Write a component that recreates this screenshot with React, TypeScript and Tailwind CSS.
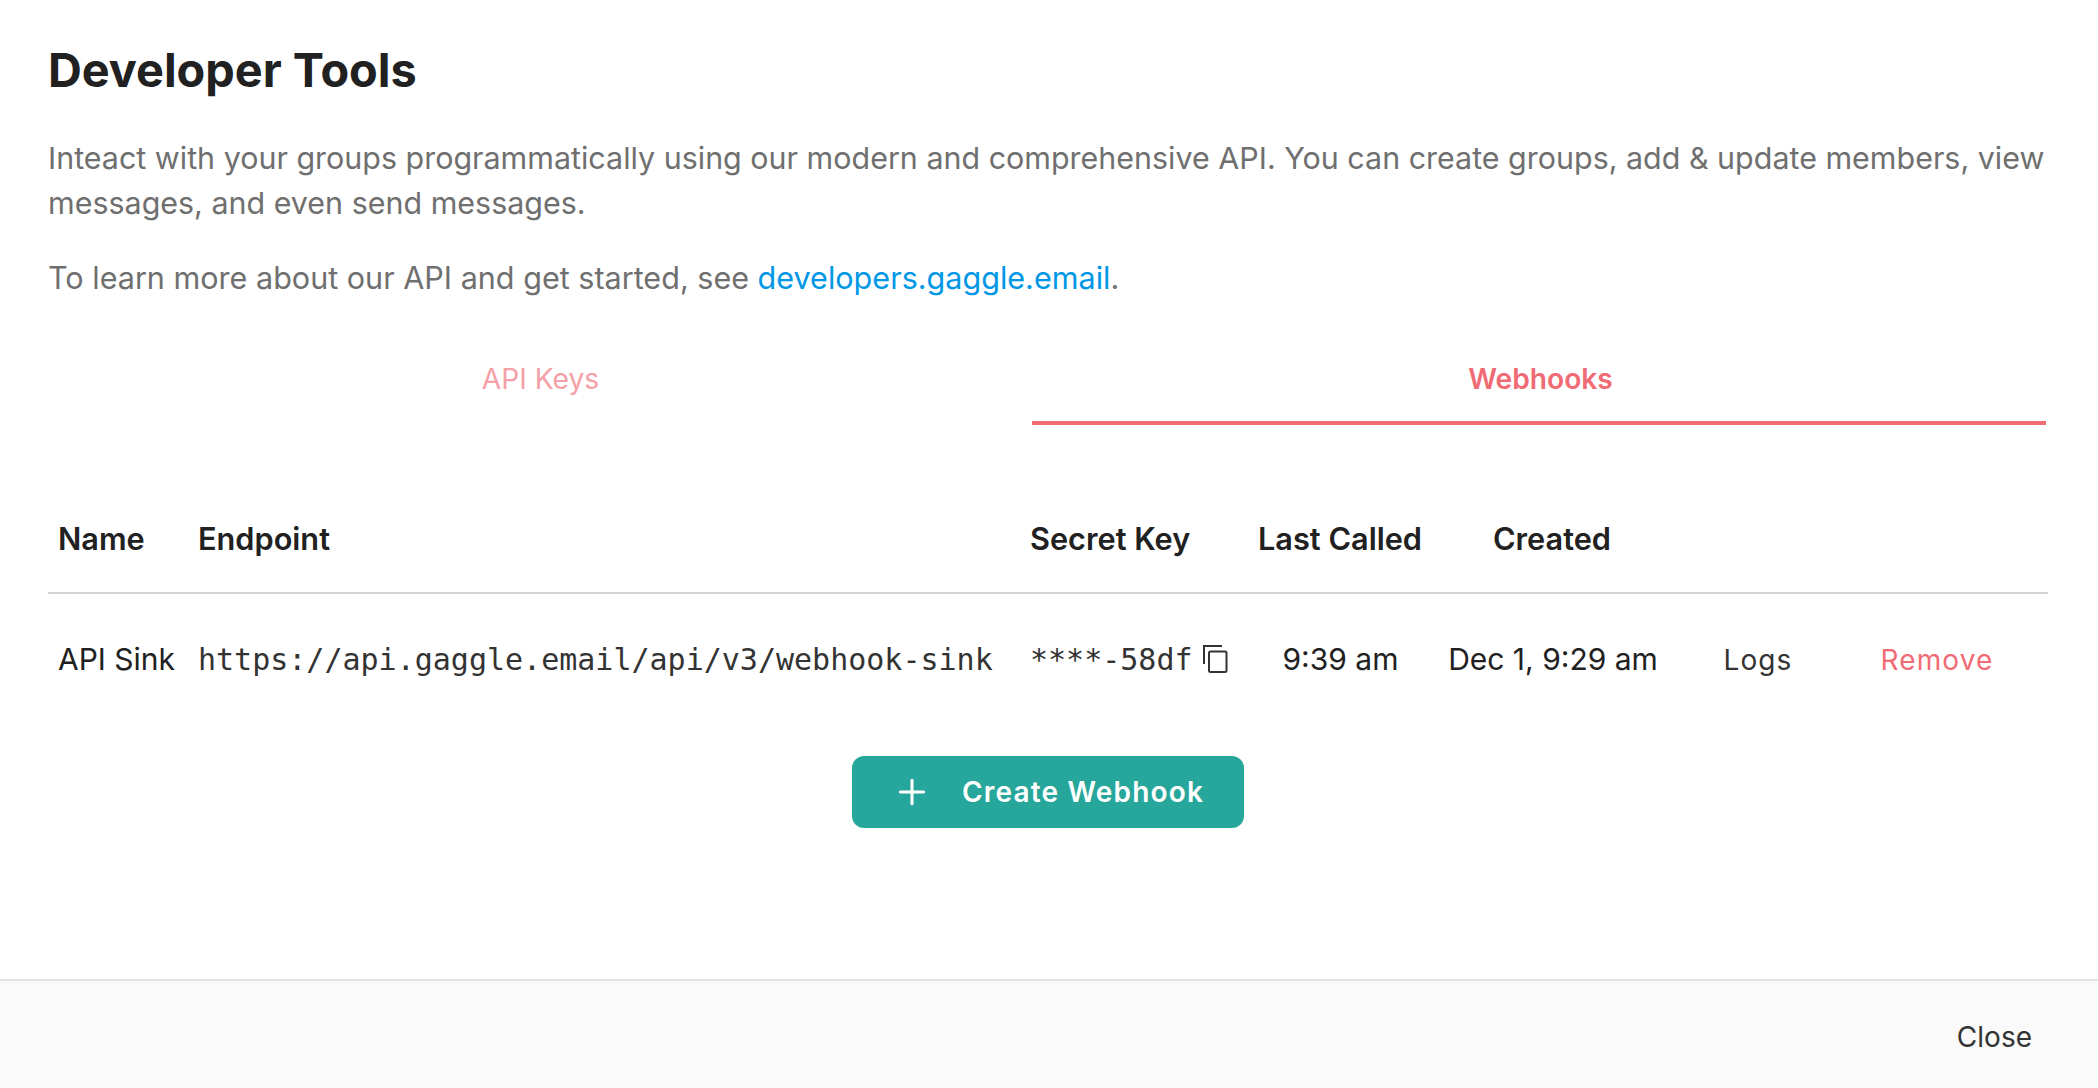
import { Plus } from "lucide-react";

const App = () => {
  return (
    <div className="h-[1088px] flex flex-col bg-white font-['Inter',sans-serif] text-[#212121] overflow-hidden">
      <div className="flex-1 px-12 pt-[42px]">
        <h1 className="text-[46.8px] leading-[56px] font-bold">Developer Tools</h1>
        <p className="mt-[38px] text-[30.45px] leading-[45px] text-[#6f6f6f]">
          Inteact with your groups programmatically using our modern and comprehensive API. You can create groups, add &amp; update members, view messages, and even send messages.
        </p>
        <p className="mt-[29px] text-[30.55px] leading-[45px] text-[#6f6f6f]">
          To learn more about our API and get started, see{" "}
          <a className="text-[#0097e6]">developers.gaggle.email</a>.
        </p>
        <div className="flex mt-[53px] text-[28.2px] text-center">
          <div className="w-[984px] h-[72px] pt-[5px] pl-[1px] text-[#f4a0a6]">API Keys</div>
          <div className="w-[1014px] h-[72px] pt-[5px] pl-[3px] font-semibold text-[#f06c75] border-b-4 border-[#f06c75]">Webhooks</div>
        </div>
        <table className="mt-[64px] w-[2000px] table-fixed border-collapse text-[30px]">
          <thead>
            <tr className="h-[104px] border-b-2 border-[#d2d2d2] text-left text-[30.7px]">
              <th className="w-[150px] pl-[10px] pb-[2px] font-semibold">Name</th>
              <th className="w-[832px] pb-[2px] font-semibold">Endpoint</th>
              <th className="w-[217px] pb-[2px] font-semibold">Secret Key</th>
              <th className="w-[186px] pb-[2px] text-center font-semibold">Last Called</th>
              <th className="w-[238px] pb-[2px] text-center font-semibold">Created</th>
              <th className="w-[172px]"></th>
              <th className="w-[205px]"></th>
            </tr>
          </thead>
          <tbody>
            <tr className="h-[132px]">
              <td className="pl-[10px] whitespace-nowrap">API Sink</td>
              <td className="font-['DejaVu_Sans_Mono',monospace] text-[#333] whitespace-nowrap">https://api.gaggle.email/api/v3/webhook-sink</td>
              <td>
                <span className="flex items-center gap-[10px] text-[#333] font-['DejaVu_Sans_Mono',monospace]">
                  ****-58df
                  <svg className="-mt-0.5" width="25" height="28" viewBox="0 0 25 28" fill="none" stroke="#333" strokeWidth="2">
                    <path d="M1 19V1h18" />
                    <rect x="6" y="6.5" width="17.5" height="20.5" rx="1.5" />
                  </svg>
                </span>
              </td>
              <td className="text-center pl-[1px]">9:39 am</td>
              <td className="text-center pl-[2px] whitespace-nowrap">Dec 1, 9:29 am</td>
              <td className="text-center pl-[2px] text-[28px] tracking-[0.04em] text-[#333]">Logs</td>
              <td className="pr-[17px] text-center text-[28px] tracking-[0.04em] text-[#f06c75]">Remove</td>
            </tr>
          </tbody>
        </table>
        <div className="flex justify-center mt-[31px] pr-0.5">
          <button className="w-[392px] h-[72px] rounded-xl bg-[#27a79b] text-white text-[28px] font-semibold tracking-[0.042em] flex items-center justify-center gap-[30px]">
            <Plus className="w-10 h-10" strokeWidth={1.8} />
            Create Webhook
          </button>
        </div>
      </div>
      <div className="h-[109px] shrink-0 bg-[#fafafa] border-t-2 border-[#e2e2e2] flex items-center justify-end pr-[66px] pt-[5px]">
        <button className="text-[28px] text-[#333]">Close</button>
      </div>
    </div>
  );
};

export default App;
